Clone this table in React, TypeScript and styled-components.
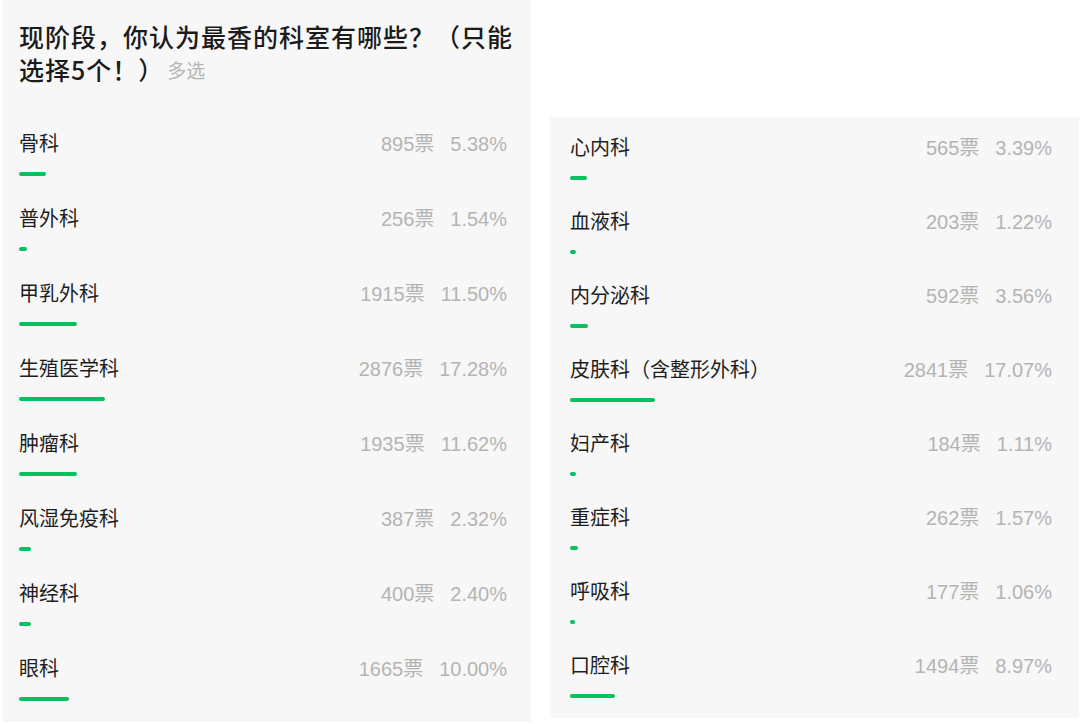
import * as React from 'react';
import styled, { createGlobalStyle } from 'styled-components';

interface Option {
  name: string;
  votes: number;
  pct: string;
}

const leftOptions: Option[] = [
  { name: '骨科', votes: 895, pct: '5.38' },
  { name: '普外科', votes: 256, pct: '1.54' },
  { name: '甲乳外科', votes: 1915, pct: '11.50' },
  { name: '生殖医学科', votes: 2876, pct: '17.28' },
  { name: '肿瘤科', votes: 1935, pct: '11.62' },
  { name: '风湿免疫科', votes: 387, pct: '2.32' },
  { name: '神经科', votes: 400, pct: '2.40' },
  { name: '眼科', votes: 1665, pct: '10.00' },
];

const rightOptions: Option[] = [
  { name: '心内科', votes: 565, pct: '3.39' },
  { name: '血液科', votes: 203, pct: '1.22' },
  { name: '内分泌科', votes: 592, pct: '3.56' },
  { name: '皮肤科（含整形外科）', votes: 2841, pct: '17.07' },
  { name: '妇产科', votes: 184, pct: '1.11' },
  { name: '重症科', votes: 262, pct: '1.57' },
  { name: '呼吸科', votes: 177, pct: '1.06' },
  { name: '口腔科', votes: 1494, pct: '8.97' },
];

const GlobalStyle = createGlobalStyle`
  html, body {
    margin: 0;
    padding: 0;
    background: #ffffff;
    font-family: "Noto Sans CJK SC", "Noto Sans", sans-serif;
  }
`;

const Page = styled.div`
  display: flex;
  align-items: flex-start;
  gap: 19px;
  width: 1080px;
  height: 724px;
  padding-left: 3px;
  box-sizing: border-box;
  overflow: hidden;
`;

const Panel = styled.div<{ $top: number; $height: number; $width: number; $padL: number; $padR: number; $padT: number; $pitch: number }>`
  margin-top: ${p => p.$top}px;
  width: ${p => p.$width}px;
  height: ${p => p.$height}px;
  padding: ${p => p.$padT}px ${p => p.$padR}px 0 ${p => p.$padL}px;
  box-sizing: border-box;
  background: #f7f7f7;
  overflow: hidden;
  --row-gap: ${p => p.$pitch - 49}px;
`;

const Title = styled.div`
  font-size: 25px;
  line-height: 33px;
  letter-spacing: 1px;
  font-weight: 500;
  color: #1b1b1b;
  margin-right: -10px;
  margin-bottom: 41px;
`;

const Multi = styled.span`
  display: inline-block;
  font-size: 19px;
  line-height: 33px;
  vertical-align: top;
  font-weight: 400;
  letter-spacing: 0;
  color: #b4b4b4;
  margin-left: 3px;
`;

const Row = styled.div`
  padding-bottom: var(--row-gap);
`;

const Head = styled.div`
  display: flex;
  align-items: center;
  justify-content: space-between;
  height: 30px;
`;

const Label = styled.span`
  font-size: 20px;
  color: #1e1e1e;
`;

const Stats = styled.span`
  font-family: "Helvetica Neue", "Liberation Sans", "Noto Sans CJK SC", sans-serif;
  font-size: 20px;
  color: #b4b4b4;
  white-space: nowrap;
`;

const Pct = styled.span`
  margin-left: 16px;
`;

const Bar = styled.div`
  height: 4px;
  margin-top: 15px;
  border-radius: 2px;
  background: #07c160;
`;

function OptionRow({ option }: { option: Option }) {
  return (
    <Row>
      <Head>
        <Label>{option.name}</Label>
        <Stats>
          {option.votes}票<Pct>{option.pct}%</Pct>
        </Stats>
      </Head>
      <Bar style={{ width: `${parseFloat(option.pct) * 5}px` }} />
    </Row>
  );
}

export default function App() {
  return (
    <>
      <GlobalStyle />
      <Page>
        <Panel $top={0} $height={722} $width={528} $padL={16} $padR={24} $padT={20} $pitch={75}>
          <Title>
            现阶段，你认为最香的科室有哪些？（只能选择5个！）<Multi>多选</Multi>
          </Title>
          {leftOptions.map(o => (
            <OptionRow key={o.name} option={o} />
          ))}
        </Panel>
        <Panel $top={117} $height={601} $width={529} $padL={20} $padR={27} $padT={14} $pitch={74}>
          {rightOptions.map(o => (
            <OptionRow key={o.name} option={o} />
          ))}
        </Panel>
      </Page>
    </>
  );
}
